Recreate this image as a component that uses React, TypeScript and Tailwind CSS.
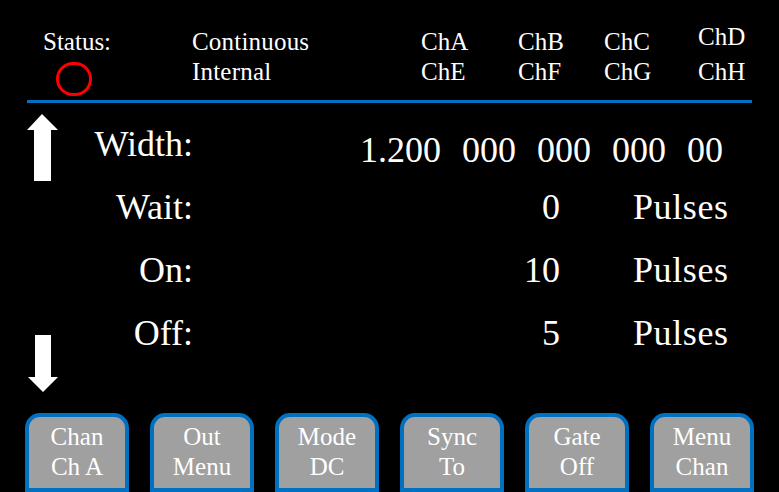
const channels = [
  ["ChA", "ChE"],
  ["ChB", "ChF"],
  ["ChC", "ChG"],
  ["ChD", "ChH"],
];

const rows = [
  { label: "Wait:", value: "0", unit: "Pulses" },
  { label: "On:", value: "10", unit: "Pulses" },
  { label: "Off:", value: "5", unit: "Pulses" },
];

const buttons = [
  ["Chan", "Ch A"],
  ["Out", "Menu"],
  ["Mode", "DC"],
  ["Sync", "To"],
  ["Gate", "Off"],
  ["Menu", "Chan"],
];

const UpArrow = () => (
  <svg width="31" height="67" viewBox="0 0 31 67" className="mt-[1px]">
    <path d="M15 0 L31 16 L24 16 L24 67 L7 67 L7 16 L0 16 Z" fill="white" />
  </svg>
);

const DownArrow = () => (
  <svg width="31" height="58" viewBox="0 0 31 58" className="mt-auto mb-[20px] ml-[1px]">
    <path d="M7 0 L23 0 L23 42 L30 42 L15 57 L0 42 L7 42 Z" fill="white" />
  </svg>
);

export default function App() {
  return (
    <div className="w-[779px] h-[492px] overflow-hidden bg-black text-white [font-family:'Liberation_Serif','Times_New_Roman',serif]">
      {/* Header */}
      <div className="pt-[27px] px-[27px]">
        <div className="h-[73px] pl-[16px] grid grid-cols-[149px_229px_97px_86px_94px_auto] text-[25px] leading-[30px]">
          <div>
            <div>Status:</div>
            <div className="mt-[5px] ml-[13px] w-[36px] h-[34px] rounded-full border-[3px] border-[#ff0000]"></div>
          </div>
          <div className="tracking-[0.2px]">
            <div>Continuous</div>
            <div>Internal</div>
          </div>
          {channels.map(([a, b], i) => (
            <div key={a}>
              <div className={i === 3 ? "-translate-y-[5px]" : ""}>{a}</div>
              <div>{b}</div>
            </div>
          ))}
        </div>
        <div className="h-[3px] bg-[#0070c0]"></div>
      </div>

      {/* Body */}
      <div className="h-[310px] px-[27px] pt-[10px] flex">
        <div className="w-[31px] flex flex-col">
          <UpArrow />
          <DownArrow />
        </div>
        <div className="text-[36px] leading-[63px]">
          <div className="h-[63px] flex items-start">
            <div className="w-[135px] text-right">Width:</div>
            <div className="pl-[167px] leading-[75px] whitespace-pre [word-spacing:1.5px]">1.200  000  000  000  00</div>
          </div>
          {rows.map((r) => (
            <div key={r.label} className="h-[63px] flex">
              <div className="w-[135px] text-right">{r.label}</div>
              <div className="w-[367px] text-right">{r.value}</div>
              <div className="ml-[73px] tracking-[0.6px]">{r.unit}</div>
            </div>
          ))}
        </div>
      </div>

      {/* Buttons */}
      <div className="pl-[25px] flex gap-[21px]">
        {buttons.map(([a, b]) => (
          <div
            key={a + b}
            className="w-[104px] h-[79px] rounded-t-[15px] border-4 border-[#0070c0] bg-[#a0a0a0] pt-[5px] text-center text-[25px] leading-[30px]"
          >
            <div>{a}</div>
            <div>{b}</div>
          </div>
        ))}
      </div>
    </div>
  );
}
